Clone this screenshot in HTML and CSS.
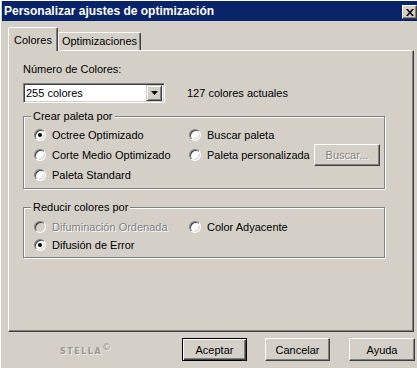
FILE: index.html
```html
<!doctype html>
<html lang="es">

<head>
    <meta charset="utf-8">
    <title>Personalizar ajustes de optimización</title>
    <link rel="stylesheet" href="styles.css">
</head>

<body>
    <div class="window">
        <div class="titlebar">
            <span class="title">Personalizar ajustes de optimización</span>
            <span class="close">
                <svg width="8" height="7" viewBox="0 0 8 7">
                    <path d="M0 0h2l2 2.5L6 0h2L5 3.5 8 7H6L4 4.5 2 7H0l3-3.5z" fill="#000"/>
                </svg>
            </span>
        </div>

        <div class="main">
            <div class="tabs">
                <div class="tab active">Colores</div>
                <div class="tab">Optimizaciones</div>
            </div>

            <div class="panel">
                <div class="label">Número de Colores:</div>
                <div class="colors-row">
                    <div class="select">
                        <span class="select-text">255 colores</span>
                        <span class="select-arrow">
                            <svg width="7" height="4" viewBox="0 0 7 4"><path d="M0 0h7L3.5 4z" fill="#000"/></svg>
                        </span>
                    </div>
                    <span class="current">127 colores actuales</span>
                </div>

                <fieldset class="group group-palette">
                    <legend>Crear paleta por</legend>
                    <div class="options">
                        <label class="option"><span class="radio checked"></span>Octree Optimizado</label>
                        <label class="option"><span class="radio"></span>Buscar paleta</label>
                        <span></span>
                        <label class="option"><span class="radio"></span>Corte Medio Optimizado</label>
                        <label class="option"><span class="radio"></span>Paleta personalizada</label>
                        <span class="btn btn-disabled">Buscar...</span>
                        <label class="option"><span class="radio"></span>Paleta Standard</label>
                    </div>
                </fieldset>

                <fieldset class="group group-reduce">
                    <legend>Reducir colores por</legend>
                    <div class="options">
                        <label class="option disabled"><span class="radio"></span>Difuminación Ordenada</label>
                        <label class="option"><span class="radio"></span>Color Adyacente</label>
                        <span></span>
                        <label class="option"><span class="radio checked"></span>Difusión de Error</label>
                    </div>
                </fieldset>
            </div>

            <div class="footer">
                <span class="logo">STELLA<sup>©</sup></span>
                <div class="buttons">
                    <span class="btn btn-default">Aceptar</span>
                    <span class="btn">Cancelar</span>
                    <span class="btn btn-wide">Ayuda</span>
                </div>
            </div>
        </div>
    </div>
</body>

</html>
```

FILE: styles.css
```css
* {
    box-sizing: border-box;
}

body {
    margin: 0;
    width: 417px;
    height: 368px;
    overflow: hidden;
    background: #d4d0c8;
    font-family: "Liberation Sans", Arial, sans-serif;
    font-size: 11px;
    color: #000;
}

.window {
    height: 368px;
    border-top: 1px solid #fff;
    border-left: 1px solid #fff;
    padding-left: 1px;
    background: #d4d0c8;
}

.titlebar {
    height: 20px;
    background: #0a246a;
    display: flex;
    align-items: center;
    justify-content: space-between;
    padding-left: 2px;
}

.title {
    color: #fff;
    font-weight: bold;
    font-size: 12px;
}

.close {
    width: 15px;
    height: 14px;
    margin-top: 2px;
    background: #d4d0c8;
    border: 1px solid;
    border-color: #fff #404040 #404040 #fff;
    box-shadow: inset -1px -1px #808080;
    display: flex;
    align-items: center;
    justify-content: center;
}

.main {
    padding: 6px 3px 0 6px;
}

.tabs {
    display: flex;
    align-items: flex-end;
    height: 23px;
    position: relative;
    z-index: 1;
}

.tab {
    height: 18px;
    padding: 0 3px;
    border: 1px solid;
    border-bottom: none;
    border-color: #fff #404040 transparent #fff;
    border-radius: 2px 2px 0 0;
    box-shadow: inset -1px 0 #808080;
    line-height: 17px;
}

.tab.active {
    height: 24px;
    margin-bottom: -1px;
    padding: 4px 5px 0 5px;
    background: #d4d0c8;
}

.panel {
    height: 282px;
    border: 1px solid;
    border-color: #fff #404040 #404040 #fff;
    box-shadow: inset -1px -1px #808080;
    padding: 12px 0 0 14px;
}

.label {
    line-height: 13px;
}

.colors-row {
    display: flex;
    align-items: center;
    margin-top: 7px;
}

.select {
    width: 142px;
    height: 20px;
    display: flex;
    align-items: center;
    justify-content: space-between;
    background: #fff;
    border: 1px solid;
    border-color: #808080 #fff #fff #808080;
    box-shadow: inset 1px 1px #404040, inset -1px -1px #d4d0c8;
    padding: 1px 2px 1px 2px;
}

.select-arrow {
    width: 16px;
    height: 16px;
    background: #d4d0c8;
    border: 1px solid;
    border-color: #d4d0c8 #404040 #404040 #d4d0c8;
    box-shadow: inset 1px 1px #fff, inset -1px -1px #808080;
    display: flex;
    align-items: center;
    justify-content: center;
}

.current {
    margin-left: 22px;
}

.group {
    width: 362px;
    margin: 7px 0 0 0;
    padding: 2px 4px 3px 0;
    border: 1px solid #808080;
    box-shadow: inset 1px 1px #fff, 1px 1px #fff;
    min-inline-size: 0;
}

.group legend {
    margin-left: 7px;
    padding: 0 2px;
    line-height: 13px;
    background: #d4d0c8;
}

.group-reduce {
    margin-top: 12px;
    padding-top: 4px;
}

.options {
    display: grid;
    grid-template-columns: 155px 125px 66px;
    grid-auto-rows: 20px;
    align-items: center;
    margin-left: 10px;
}

.group-reduce .options {
    grid-auto-rows: 18px;
}

.option {
    display: flex;
    align-items: center;
    gap: 6px;
}

.option.disabled {
    color: #808080;
    text-shadow: 1px 1px #fff;
}

.radio {
    position: relative;
    width: 12px;
    height: 12px;
    border-radius: 50%;
    background: #fff;
    border: 1px solid;
    border-color: #808080 #fff #fff #808080;
    box-shadow: inset 1px 1px #404040, inset -1px -1px #d4d0c8;
}

.option.disabled .radio {
    background: #d4d0c8;
}

.radio.checked::after {
    content: "";
    position: absolute;
    left: 3px;
    top: 3px;
    width: 4px;
    height: 4px;
    border-radius: 50%;
    background: #000;
}

.btn {
    width: 65px;
    height: 23px;
    display: flex;
    align-items: center;
    justify-content: center;
    background: #d4d0c8;
    border: 1px solid;
    border-color: #fff #404040 #404040 #fff;
    box-shadow: inset -1px -1px #808080;
}

.btn-disabled {
    width: 66px;
    height: 22px;
    color: #808080;
    text-shadow: 1px 1px #fff;
}

.btn-default {
    border-color: #000;
    box-shadow: inset 1px 1px #fff, inset -1px -1px #404040, inset -2px -2px #808080;
}

.btn-wide {
    width: 66px;
}

.footer {
    display: flex;
    align-items: center;
    margin-top: 6px;
    height: 23px;
}

.logo {
    margin-left: 52px;
    margin-top: -2px;
    font-family: "DejaVu Sans", sans-serif;
    font-size: 8px;
    font-weight: bold;
    letter-spacing: 1.5px;
    color: #9c988f;
    text-shadow: 1px 1px #eeeeee;
}

.logo sup {
    font-size: 9px;
    font-weight: normal;
    letter-spacing: 0;
}

.buttons {
    display: flex;
    margin-left: auto;
    margin-right: -1px;
    gap: 18px;
}

.buttons .btn-wide {
    margin-left: 1px;
}
```
